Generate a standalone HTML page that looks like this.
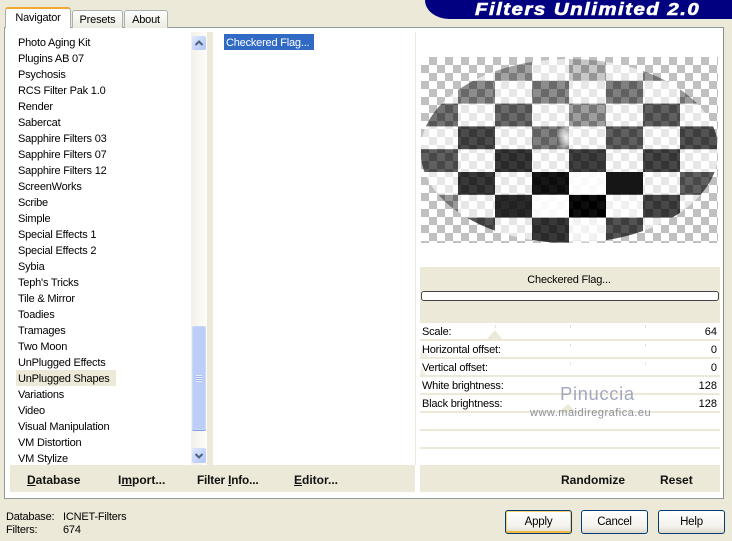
<!DOCTYPE html>
<html><head><meta charset="utf-8"><style>
html,body{margin:0;padding:0}
body{width:732px;height:541px;position:relative;overflow:hidden;background:#ECE9D8;font:11px "Liberation Sans",sans-serif;letter-spacing:-.2px;color:#000}
div,span.t{position:absolute;white-space:nowrap}
.l{left:18px;height:16px;line-height:18px}
.b{font-weight:bold;font-size:12px;letter-spacing:0;top:472px;line-height:16px;color:#111}
.p{left:422px;height:16px;line-height:18px}
.v{right:15px;height:16px;line-height:18px;letter-spacing:0}
.sep{left:420px;width:300px;height:2px;background:#ECE9D8}
.btn{top:510px;width:65px;height:22px;border:1px solid #003C74;border-radius:3px;background:linear-gradient(#fff,#f3f2ec 70%,#dcd8cc);text-align:center;line-height:23px;font-size:11.5px}
.tab{border:1px solid #a8b0b0;border-bottom:0;border-radius:3px 3px 0 0;background:linear-gradient(#fff,#ECEBE0);text-align:center}
</style></head><body>

<div style="left:425px;top:0;width:307px;height:19px;background:#000080;border-bottom-left-radius:24px 19px"></div>
<div style="left:475px;top:-1px;font:italic bold 17.5px/20px 'Liberation Sans',sans-serif;color:#fff;letter-spacing:1.25px;-webkit-text-stroke:.6px #fff;transform:scaleX(1.17);transform-origin:left top">Filters Unlimited 2.0</div>

<div style="left:4px;top:27px;width:718px;height:470px;border:1px solid #919B9C;border-right:1px solid #8f8f88;background:#fff"></div>
<div class="tab" style="left:72px;top:10px;width:49px;height:17px;line-height:18px">Presets</div>
<div class="tab" style="left:124px;top:10px;width:42px;height:17px;line-height:18px">About</div>
<div style="left:5px;top:7px;width:66px;height:21px;background:#fff;border:1px solid #a8b0b0;border-top:2px solid #F0A830;border-bottom:0;border-radius:3px 3px 0 0;box-sizing:border-box;text-align:center;line-height:19px">Navigator</div>

<div style="left:207px;top:32px;width:6px;height:433px;background:#ECE9D8"></div>
<div style="left:191px;top:32px;width:16px;height:433px;background:linear-gradient(90deg,#f3f1e6,#fdfdfa)"></div>
<div style="left:192px;top:36px;width:14px;height:14px;background:linear-gradient(135deg,#dfe8fd,#b1c5f5);border:0;border-radius:2px"></div>
<svg style="position:absolute;left:192px;top:36px" width="14" height="14"><path d="M3.5 9 L7 5.5 L10.5 9" fill="none" stroke="#4D6185" stroke-width="2"/></svg>
<div style="left:192px;top:326px;width:14px;height:104px;background:#BCCEF8;border-radius:2px;box-shadow:inset 0 0 0 1px #cdd9fa,0 1px 0 #7f9ee0"></div>
<div style="left:196px;top:375px;width:6px;height:7px;background:repeating-linear-gradient(#e8eefc 0 1px,#9fb4e6 1px 2px)"></div>
<div style="left:192px;top:448px;width:14px;height:15px;background:linear-gradient(135deg,#dfe8fd,#b1c5f5);border-radius:2px"></div>
<svg style="position:absolute;left:192px;top:448px" width="14" height="15"><path d="M3.5 6 L7 9.5 L10.5 6" fill="none" stroke="#4D6185" stroke-width="2"/></svg>

<div style="left:16px;top:370px;width:100px;height:16px;background:#ECE9D8"></div>
<div class="l" style="top:34px">Photo Aging Kit</div>
<div class="l" style="top:50px">Plugins AB 07</div>
<div class="l" style="top:66px">Psychosis</div>
<div class="l" style="top:82px">RCS Filter Pak 1.0</div>
<div class="l" style="top:98px">Render</div>
<div class="l" style="top:114px">Sabercat</div>
<div class="l" style="top:130px">Sapphire Filters 03</div>
<div class="l" style="top:146px">Sapphire Filters 07</div>
<div class="l" style="top:162px">Sapphire Filters 12</div>
<div class="l" style="top:178px">ScreenWorks</div>
<div class="l" style="top:194px">Scribe</div>
<div class="l" style="top:210px">Simple</div>
<div class="l" style="top:226px">Special Effects 1</div>
<div class="l" style="top:242px">Special Effects 2</div>
<div class="l" style="top:258px">Sybia</div>
<div class="l" style="top:274px">Teph's Tricks</div>
<div class="l" style="top:290px">Tile &amp; Mirror</div>
<div class="l" style="top:306px">Toadies</div>
<div class="l" style="top:322px">Tramages</div>
<div class="l" style="top:338px">Two Moon</div>
<div class="l" style="top:354px">UnPlugged Effects</div>
<div class="l" style="top:370px">UnPlugged Shapes</div>
<div class="l" style="top:386px">Variations</div>
<div class="l" style="top:402px">Video</div>
<div class="l" style="top:418px">Visual Manipulation</div>
<div class="l" style="top:434px">VM Distortion</div>
<div class="l" style="top:450px">VM Stylize</div>

<div style="left:224px;top:34px;width:90px;height:16px;background:#316AC5;color:#fff;line-height:18px;text-indent:2px">Checkered Flag...</div>

<div style="left:415px;top:32px;width:1px;height:433px;background:#ECE9D8"></div>
<svg style="position:absolute;left:0;top:0" width="732" height="260">
<defs>
<pattern id="c" patternUnits="userSpaceOnUse" x="421" y="57" width="16" height="16"><rect width="16" height="16" fill="#fff"/><rect x="8" width="8" height="8" fill="#c0c0c0"/><rect y="8" width="8" height="8" fill="#c0c0c0"/></pattern>
<pattern id="w" patternUnits="userSpaceOnUse" x="421" y="58" width="74" height="45.6"><rect x="37" width="37" height="22.8" fill="#fff"/><rect y="22.8" width="37" height="22.8" fill="#fff"/></pattern>
<clipPath id="e"><ellipse cx="569.5" cy="151" rx="149" ry="92"/></clipPath>
<radialGradient id="bl"><stop offset="0" stop-color="#fff" stop-opacity=".9"/><stop offset=".6" stop-color="#fff" stop-opacity=".45"/><stop offset="1" stop-color="#fff" stop-opacity="0"/></radialGradient>
<filter id="s" x="0" y="0" width="1" height="1"><feGaussianBlur stdDeviation=".35"/></filter>
</defs>
<g filter="url(#s)">
<rect x="421" y="57" width="297" height="186" fill="url(#c)"/>
<g clip-path="url(#e)">
<rect x="421" y="57" width="297" height="186" fill="url(#w)" opacity=".62"/>
<g fill="#000">
<rect x="495" y="58" width="37" height="22.8" opacity=".36"/>
<rect x="569" y="58" width="37" height="22.8" opacity=".22"/>
<rect x="643" y="58" width="37" height="22.8" opacity=".4"/>
<rect x="458" y="80.8" width="37" height="22.8" opacity=".45"/>
<rect x="532" y="80.8" width="37" height="22.8" opacity=".45"/>
<rect x="606" y="80.8" width="37" height="22.8" opacity=".5"/>
<rect x="680" y="80.8" width="37" height="22.8" opacity=".4"/>
<rect x="421" y="103.6" width="37" height="22.8" opacity=".55"/>
<rect x="495" y="103.6" width="37" height="22.8" opacity=".58"/>
<rect x="569" y="103.6" width="37" height="22.8" opacity=".38"/>
<rect x="643" y="103.6" width="37" height="22.8" opacity=".62"/>
<rect x="458" y="126.4" width="37" height="22.8" opacity=".7"/>
<rect x="532" y="126.4" width="37" height="22.8" opacity=".5"/>
<rect x="606" y="126.4" width="37" height="22.8" opacity=".62"/>
<rect x="680" y="126.4" width="37" height="22.8" opacity=".68"/>
<rect x="421" y="149.2" width="37" height="22.8" opacity=".62"/>
<rect x="495" y="149.2" width="37" height="22.8" opacity=".78"/>
<rect x="569" y="149.2" width="37" height="22.8" opacity=".75"/>
<rect x="643" y="149.2" width="37" height="22.8" opacity=".72"/>
<rect x="458" y="172" width="37" height="22.8" opacity=".78"/>
<rect x="532" y="172" width="37" height="22.8" opacity=".93"/>
<rect x="606" y="172" width="37" height="22.8" opacity=".9"/>
<rect x="680" y="172" width="37" height="22.8" opacity=".62"/>
<rect x="421" y="194.8" width="37" height="22.8" opacity=".4"/>
<rect x="495" y="194.8" width="37" height="22.8" opacity=".83"/>
<rect x="569" y="194.8" width="37" height="22.8" opacity=".97"/>
<rect x="643" y="194.8" width="37" height="22.8" opacity=".72"/>
<rect x="458" y="217.6" width="37" height="25" opacity=".68"/>
<rect x="532" y="217.6" width="37" height="25" opacity=".78"/>
<rect x="606" y="217.6" width="37" height="25" opacity=".68"/>
</g>
<g fill="#fff" opacity=".8">
<rect x="569" y="172" width="37" height="22.8"/>
<rect x="532" y="194.8" width="37" height="22.8"/>
<rect x="606" y="194.8" width="37" height="22.8" opacity=".5"/>
<rect x="569" y="217.6" width="37" height="25" opacity=".6"/>
</g>
<ellipse cx="566" cy="137" rx="9" ry="14" fill="url(#bl)"/>
</g>
</g>
</svg>

<div style="left:420px;top:267px;width:300px;height:56px;background:#ECE9D8"></div>
<div style="left:420px;top:271px;width:298px;text-align:center;line-height:18px">Checkered Flag...</div>
<div style="left:421px;top:291px;width:296px;height:8px;background:#fff;border:1px solid #444;border-radius:3px"></div>

<div class="sep" style="top:339px"></div>
<div class="sep" style="top:357px"></div>
<div class="sep" style="top:375px"></div>
<div class="sep" style="top:393px"></div>
<div class="sep" style="top:411px"></div>
<div class="sep" style="top:429px"></div>
<div class="sep" style="top:447px"></div>
<svg style="position:absolute;left:415px;top:320px" width="317" height="130"><g fill="#ECE9D8"><path d="M72 19 L87 19 L80 10 Z"/><path d="M5 37 L13 37 L7 27 Z" opacity=".7"/><path d="M5 55 L11 55 L6 46 Z" opacity=".7"/><path d="M145 91 L160 91 L153 84 Z"/></g><g fill="#e4e2d4"><rect x="80" y="5" width="1" height="3"/><rect x="155" y="5" width="1" height="3"/><rect x="230" y="5" width="1" height="3"/><rect x="155" y="24" width="1" height="3"/><rect x="230" y="24" width="1" height="3"/><rect x="155" y="42" width="1" height="3"/><rect x="230" y="42" width="1" height="3"/></g></svg>

<div class="p" style="top:323px">Scale:</div><div class="v" style="top:323px">64</div>
<div class="p" style="top:341px">Horizontal offset:</div><div class="v" style="top:341px">0</div>
<div class="p" style="top:359px">Vertical offset:</div><div class="v" style="top:359px">0</div>
<div class="p" style="top:377px">White brightness:</div><div class="v" style="top:377px">128</div>
<div class="p" style="top:395px">Black brightness:</div><div class="v" style="top:395px">128</div>

<div style="left:560px;top:382px;font-size:18.5px;line-height:24px;color:#a4a8bf;letter-spacing:.6px">Pinuccia</div>
<div style="left:530px;top:406px;font-size:11px;line-height:14px;color:#8d8f9c;letter-spacing:.5px">www.maidiregrafica.eu</div>

<div style="left:10px;top:465px;width:405px;height:27px;background:#ECE9D8"></div>
<div style="left:420px;top:465px;width:300px;height:27px;background:#ECE9D8"></div>
<div class="b" style="left:27px"><u>D</u>atabase</div>
<div class="b" style="left:118px">I<u>m</u>port...</div>
<div class="b" style="left:197px;letter-spacing:-.15px;font-size:11.8px">Filter <u>I</u>nfo...</div>
<div class="b" style="left:294px"><u>E</u>ditor...</div>
<div class="b" style="left:561px">Randomize</div>
<div class="b" style="left:660px">Reset</div>

<div style="left:6px;top:509px;line-height:16px">Database:</div>
<div style="left:63px;top:509px;line-height:16px">ICNET-Filters</div>
<div style="left:6px;top:522px;line-height:16px">Filters:</div>
<div style="left:63px;top:522px;line-height:16px">674</div>

<div class="btn" style="left:505px;box-shadow:inset 0 -2px 0 #F5B840,inset 0 0 0 1px #F8D070">Apply</div>
<div class="btn" style="left:581px">Cancel</div>
<div class="btn" style="left:658px">Help</div>
</body></html>
